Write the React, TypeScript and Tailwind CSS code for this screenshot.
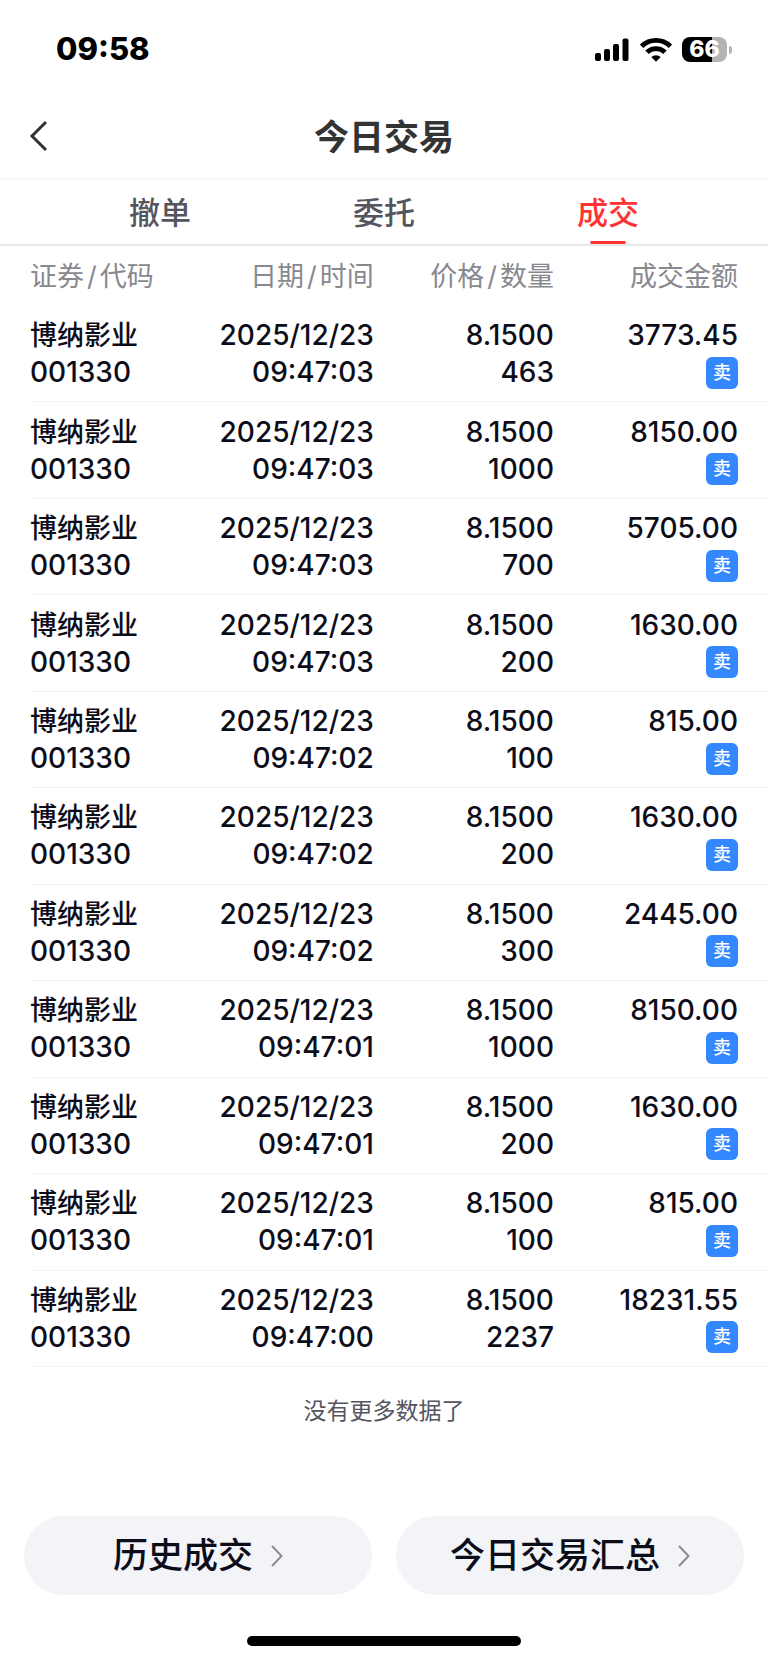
import { useState } from 'react'

interface Trade {
  time: string
  quantity: string
  amount: string
}

const STOCK_NAME = '博纳影业'
const STOCK_CODE = '001330'
const TRADE_DATE = '2025/12/23'
const PRICE = '8.1500'

const trades: Trade[] = [
  { time: '09:47:03', quantity: '463', amount: '3773.45' },
  { time: '09:47:03', quantity: '1000', amount: '8150.00' },
  { time: '09:47:03', quantity: '700', amount: '5705.00' },
  { time: '09:47:03', quantity: '200', amount: '1630.00' },
  { time: '09:47:02', quantity: '100', amount: '815.00' },
  { time: '09:47:02', quantity: '200', amount: '1630.00' },
  { time: '09:47:02', quantity: '300', amount: '2445.00' },
  { time: '09:47:01', quantity: '1000', amount: '8150.00' },
  { time: '09:47:01', quantity: '200', amount: '1630.00' },
  { time: '09:47:01', quantity: '100', amount: '815.00' },
  { time: '09:47:00', quantity: '2237', amount: '18231.55' },
]

const tabs = ['撤单', '委托', '成交']

function StatusBar() {
  return (
    <div className="flex h-[94px] items-center justify-between pt-[5px] pr-9 pl-14 text-black">
      <span className="text-[31px] font-extrabold">09:58</span>
      <div className="flex items-center">
        <svg width="34" height="24" viewBox="0 0 34 24" fill="currentColor" aria-hidden="true">
          <rect x="0" y="15" width="6" height="8" rx="2" />
          <rect x="9" y="11" width="6" height="12" rx="2" />
          <rect x="18" y="6" width="6" height="17" rx="2" />
          <rect x="27.500" y="0.500" width="6" height="22.500" rx="2" />
        </svg>
        <svg className="ml-[11px]" width="32" height="24" viewBox="0 0 32 24" fill="none" stroke="currentColor" strokeWidth="4.8" aria-hidden="true">
          <path d="M1.600 8.300a20.700 20.700 0 0 1 28.800 0" />
          <path d="M7 14.300a12.900 12.900 0 0 1 18 0" />
          <path d="M16 23.700l-4.700-4.600a6.700 6.700 0 0 1 9.400 0z" fill="currentColor" stroke="none" />
        </svg>
        <div className="ml-[10px] flex h-[25px] w-[45px] items-center justify-center rounded-[8px] bg-linear-to-r from-black from-66% to-[#b3b3b3] to-66% text-[23px] leading-none font-extrabold text-white">
          66
        </div>
        <div className="ml-[2px] h-2 w-[3px] rounded-r-full bg-[#b3b3b3]" />
      </div>
    </div>
  )
}

function ArrowRight() {
  return (
    <svg width="12" height="22" viewBox="0 0 12 22" fill="none" stroke="#8c8c92" strokeWidth="2" aria-hidden="true">
      <path d="M1 1l9.500 10L1 21" />
    </svg>
  )
}

function PairHeading({ first, second }: { first: string; second: string }) {
  return (
    <>
      {first}
      <span className="mx-[3px]">/</span>
      {second}
    </>
  )
}

function TradeRow({ trade }: { trade: Trade }) {
  return (
    <tr className="border-b border-[#f2f2f4]">
      <td className="pt-[11px] pb-[10px] text-left">
        <div className="text-[27px]">{STOCK_NAME}</div>
        <div>{STOCK_CODE}</div>
      </td>
      <td className="pt-[11px] pr-[3px] pb-[10px]">
        <div>{TRADE_DATE}</div>
        <div>{trade.time}</div>
      </td>
      <td className="pt-[11px] pb-[10px]">
        <div>{PRICE}</div>
        <div>{trade.quantity}</div>
      </td>
      <td className="pt-[11px] pr-[30px] pb-[10px]">
        <div>{trade.amount}</div>
        <div className="flex h-[37px] items-center justify-end">
          <span className="flex size-8 items-center justify-center rounded-md bg-[#3388ff] text-[18px] leading-none text-white">
            卖
          </span>
        </div>
      </td>
    </tr>
  )
}

export default function App() {
  const [active, setActive] = useState('成交')

  return (
    <div className="flex min-h-screen flex-col bg-white font-['Inter','Noto_Sans_CJK_SC',sans-serif] text-[#0d0d1a]">
      <StatusBar />

      <header className="grid h-[86px] grid-cols-[1fr_auto_1fr] items-center border-b-2 border-[#f7f7f7] px-7 text-[#333]">
        <button type="button" aria-label="返回" className="w-8">
          <svg width="20" height="32" viewBox="0 0 20 32" fill="none" stroke="currentColor" strokeWidth="3">
            <path d="M18 2L4 16l14 14" />
          </svg>
        </button>
        <h1 className="pt-0.5 text-[35px] font-bold">今日交易</h1>
      </header>

      <nav className="grid h-[66px] grid-cols-3 border-b-2 border-[#e8e8ea] px-12">
        {tabs.map(tab => (
          <button
            key={tab}
            type="button"
            onClick={() => setActive(tab)}
            className={`relative pt-0.5 text-[31px] font-medium ${tab === active ? 'text-[#ff3333]' : 'text-[#555560]'}`}
          >
            {tab}
            {tab === active && (
              <span className="absolute bottom-0 left-1/2 h-[3px] w-[35px] -translate-x-1/2 bg-[#ff3333]" />
            )}
          </button>
        ))}
      </nav>

      <main className="flex grow flex-col pl-[30px]">
        <table className="w-full grow table-fixed text-right text-[28px] leading-[37px] font-medium">
          <thead>
            <tr className="h-[60px] text-[27px] text-[#88888f]">
              <th className="w-[20%] text-left font-normal whitespace-nowrap">
                <PairHeading first="证券" second="代码" />
              </th>
              <th className="w-[27%] pr-[3px] font-normal">
                <PairHeading first="日期" second="时间" />
              </th>
              <th className="w-[24%] font-normal">
                <PairHeading first="价格" second="数量" />
              </th>
              <th className="w-[29%] pr-[30px] font-normal">成交金额</th>
            </tr>
          </thead>
          <tbody>
            {trades.map((trade, i) => (
              <TradeRow key={i} trade={trade} />
            ))}
          </tbody>
        </table>
      </main>

      <p className="pt-[26px] pb-[87px] text-center text-[23px] leading-9 text-[#555560]">没有更多数据了</p>

      <footer className="px-6 pb-[17px]">
        <div className="grid grid-cols-2 gap-6">
          {['历史成交', '今日交易汇总'].map(label => (
            <button
              key={label}
              type="button"
              className="flex h-[79px] items-center justify-center gap-[18px] rounded-full bg-[#f2f4f8] text-[35px] font-medium"
            >
              {label}
              <ArrowRight />
            </button>
          ))}
        </div>
        <div className="mx-auto mt-[41px] h-[10px] w-[274px] rounded-full bg-black" />
      </footer>
    </div>
  )
}
